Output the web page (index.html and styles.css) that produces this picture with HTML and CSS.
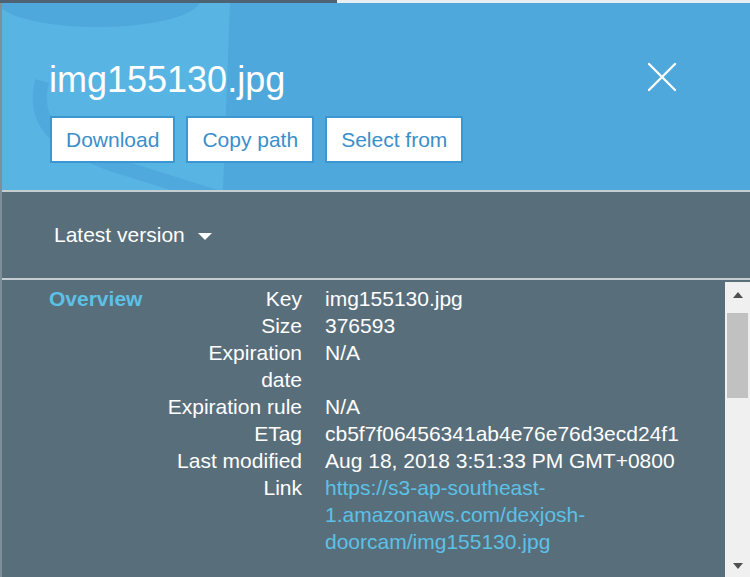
FILE: index.html
```html
<!DOCTYPE html>
<html lang="en">
<head>
<meta charset="utf-8">
<title>img155130.jpg</title>
<link rel="stylesheet" href="styles.css">
</head>
<body>
<div class="topstrip"><div class="topstrip-dark"></div></div>
<div class="panel">
  <header class="hero">
    <svg class="bucket" width="260" height="187" viewBox="0 0 260 187" aria-hidden="true">
      <path d="M0 0 L228 0 L221 187 L0 187 Z" fill="#57b4e3"/>
      <ellipse cx="96" cy="-3" rx="102" ry="27" fill="#4fa8db"/>
      <path d="M40 78 C30 118 52 142 112 162 L250 205" fill="none" stroke="#50a9dc" stroke-width="14"/>
    </svg>
    <div class="hero-main">
      <h1 class="title">img155130.jpg</h1>
      <div class="actions">
        <button class="btn">Download</button>
        <button class="btn">Copy path</button>
        <button class="btn">Select from</button>
      </div>
    </div>
    <button class="close" aria-label="Close">
      <svg width="30" height="30" viewBox="0 0 30 30"><path d="M2 2 L28 28 M28 2 L2 28" stroke="#ffffff" stroke-width="2.3" stroke-linecap="round" fill="none"/></svg>
    </button>
  </header>
  <div class="version-bar">
    <span class="version">Latest version</span><span class="caret"></span>
  </div>
  <div class="content">
    <div class="details">
      <h2 class="section-title">Overview</h2>
      <dl class="props">
        <dt>Key</dt><dd>img155130.jpg</dd>
        <dt>Size</dt><dd>376593</dd>
        <dt>Expiration date</dt><dd>N/A</dd>
        <dt>Expiration rule</dt><dd>N/A</dd>
        <dt>ETag</dt><dd>cb5f7f06456341ab4e76e76d3ecd24f1</dd>
        <dt>Last modified</dt><dd>Aug 18, 2018 3:51:33 PM GMT+0800</dd>
        <dt>Link</dt><dd><a class="link" href="#">https://s3-ap-southeast-1.amazonaws.com/dexjosh-doorcam/img155130.jpg</a></dd>
      </dl>
    </div>
    <div class="scrollbar">
      <div class="sb-btn sb-up"><span class="arrow-up"></span></div>
      <div class="sb-thumb"></div>
      <div class="sb-track"></div>
      <div class="sb-btn sb-down"><span class="arrow-down"></span></div>
    </div>
  </div>
</div>
</body>
</html>
```

FILE: styles.css
```css
html, body {
  margin: 0;
  padding: 0;
}
body {
  width: 750px;
  height: 577px;
  overflow: hidden;
  background: #eaf1f5;
  font-family: "Liberation Sans", Arial, sans-serif;
}
.topstrip {
  height: 3px;
  display: flex;
  background: #e8eff3;
}
.topstrip-dark {
  width: 337px;
  background: #4d6272;
}
.panel {
  height: 574px;
  border-left: 2px solid #7f8f99;
  display: flex;
  flex-direction: column;
}
.hero {
  position: relative;
  box-sizing: border-box;
  height: 189px;
  flex-shrink: 0;
  background: #4fa8db;
  border-bottom: 2px solid #c4cdd2;
  display: flex;
  justify-content: space-between;
  align-items: flex-start;
  padding: 56px 73px 0 48px;
  overflow: hidden;
}
.bucket {
  position: absolute;
  left: 0;
  top: 0;
}
.hero-main {
  position: relative;
}
.title {
  margin: 0 0 0 -1px;
  font-size: 36px;
  line-height: 42px;
  font-weight: normal;
  color: #ffffff;
}
.actions {
  display: flex;
  gap: 11px;
  margin-top: 15px;
}
.btn {
  font-family: inherit;
  font-size: 21px;
  line-height: 23px;
  padding: 10px 14px;
  border: 2px solid #3b96d2;
  background: #ffffff;
  color: #3a8fcb;
  border-radius: 0;
  margin: 0;
}
.close {
  position: relative;
  margin-top: 3px;
  width: 30px;
  height: 30px;
  padding: 0;
  border: 0;
  background: none;
}
.close svg {
  display: block;
}
.version-bar {
  box-sizing: border-box;
  height: 88px;
  flex-shrink: 0;
  background: #596e7b;
  border-bottom: 2px solid #c4cdd2;
  display: flex;
  align-items: center;
  padding-left: 52px;
  color: #ffffff;
  font-size: 21px;
}
.caret {
  width: 0;
  height: 0;
  margin-left: 13px;
  margin-top: 2px;
  border-left: 7px solid transparent;
  border-right: 7px solid transparent;
  border-top: 7px solid #ffffff;
}
.content {
  flex: 1;
  min-height: 0;
  display: flex;
  background: #596e7b;
  overflow: hidden;
}
.details {
  flex: 1;
  display: flex;
  align-items: flex-start;
  padding: 5px 0 0 47px;
}
.section-title {
  flex-shrink: 0;
  width: 117px;
  margin: 0;
  font-size: 21px;
  line-height: 27px;
  font-weight: bold;
  color: #5cc1e6;
}
.props {
  display: grid;
  grid-template-columns: 136px 370px;
  column-gap: 23px;
  margin: 0;
  font-size: 21px;
  line-height: 27px;
  color: #ffffff;
}
.props dt {
  text-align: right;
}
.props dd {
  margin: 0;
}
.link {
  color: #5cc1e6;
  text-decoration: none;
}
.scrollbar {
  flex-shrink: 0;
  width: 25px;
  margin-top: 2px;
  background: #f0f0f0;
  display: flex;
  flex-direction: column;
}
.sb-btn {
  display: flex;
  align-items: center;
  justify-content: center;
}
.sb-up {
  height: 26px;
  margin-bottom: 5px;
}
.sb-down {
  height: 22px;
}
.sb-thumb {
  height: 85px;
  margin: 0 2px;
  background: #c1c1c1;
}
.sb-track {
  flex: 1;
}
.arrow-up {
  width: 0;
  height: 0;
  border-left: 5.5px solid transparent;
  border-right: 5.5px solid transparent;
  border-bottom: 6px solid #505050;
}
.arrow-down {
  width: 0;
  height: 0;
  border-left: 5.5px solid transparent;
  border-right: 5.5px solid transparent;
  border-top: 6px solid #505050;
}
```
